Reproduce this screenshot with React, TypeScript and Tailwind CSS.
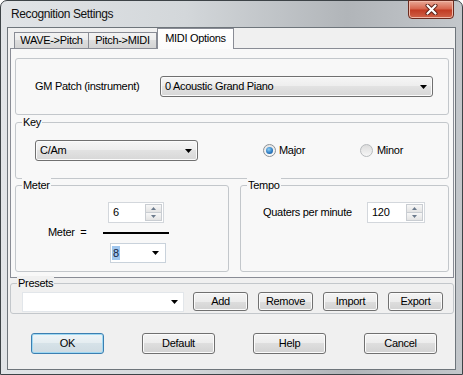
import React from "react";

const Arrow = () => (
  <svg width="7" height="4" viewBox="0 0 7 4" className="shrink-0">
    <path d="M0 0H7L3.5 4Z" fill="#000" />
  </svg>
);

function DropList({ text, className }: { text: string; className: string }) {
  return (
    <div
      className={`flex items-center justify-between border border-[#707070] rounded-[3px] bg-[linear-gradient(#f6f6f6,#ededed_50%,#e2e2e2_50%,#d7d7d7)] shadow-[inset_0_0_0_1px_#fbfbfb] pl-[4px] pr-[5px] ${className}`}
    >
      <span>{text}</span>
      <Arrow />
    </div>
  );
}

function SpinArrow({ up }: { up?: boolean }) {
  return (
    <svg width="5" height="3" viewBox="0 0 5 3">
      <path d={up ? "M0 3H5L2.5 0Z" : "M0 0H5L2.5 3Z"} fill="#6b7a8c" />
    </svg>
  );
}

function Spin({ value, className }: { value: string; className: string }) {
  return (
    <div className={`flex border border-[#d3d7dc] bg-white ${className}`}>
      <div className="flex-1 flex items-center pl-[4px]">{value}</div>
      <div className="w-[18px] flex flex-col p-px pl-0">
        <div className="flex-1 flex items-center justify-center border border-[#c9cdd2] bg-[linear-gradient(#f7f7f7,#e4e4e4)]">
          <SpinArrow up />
        </div>
        <div className="flex-1 flex items-center justify-center border border-t-0 border-[#c9cdd2] bg-[linear-gradient(#f7f7f7,#e4e4e4)]">
          <SpinArrow />
        </div>
      </div>
    </div>
  );
}

function Group({
  label,
  className,
  bg,
  children,
}: {
  label: string;
  className: string;
  bg: string;
  children?: React.ReactNode;
}) {
  return (
    <div className={`relative border border-[#c3c7cb] rounded-[3px] ${className}`}>
      <span className={`absolute left-[6px] top-[-8px] px-px leading-[14px] ${bg}`}>{label}</span>
      {children}
    </div>
  );
}

function Btn({
  children,
  className,
  def,
}: {
  children: React.ReactNode;
  className: string;
  def?: boolean;
}) {
  return (
    <div
      className={`flex items-center justify-center rounded-[3px] border ${
        def
          ? "border-[#3c7fb1] bg-[linear-gradient(#eef5f8,#e4ecf0_50%,#d6e2e8_50%,#cfdbe2)] shadow-[inset_0_0_0_1px_#9fd8f2]"
          : "border-[#707070] bg-[linear-gradient(#f4f4f4,#ececec_50%,#dedede_50%,#d2d2d2)] shadow-[inset_0_0_0_1px_#fbfbfb]"
      } ${className}`}
    >
      {children}
    </div>
  );
}

export default function App() {
  return (
    <div className="w-[463px] h-[375px] overflow-hidden font-['Liberation_Sans',Arial,sans-serif] text-[11px] leading-[13px] tracking-[-0.3px] text-black">
      <div className="w-full h-full flex flex-col border border-[#3d4347] rounded-t-[7px] bg-[linear-gradient(90deg,#e1e4e7,#d3d7da_40%,#b1b5b9_75%,#c3c7cb)]">
        {/* title bar */}
        <div className="h-[26px] flex items-start justify-between shrink-0">
          <div className="pl-[10px] pt-[6px] text-[12px] leading-[14px] tracking-[-0.4px] text-[#111]">
            Recognition Settings
          </div>
          <div className="mr-[8px] -mt-px w-[46px] h-[19px] rounded-b-[4px] border border-[#6b2a1e] bg-[linear-gradient(#e9a896,#d6634b_48%,#c13a22_52%,#cf6248)] shadow-[inset_0_0_0_1px_#f0b8a8] flex items-center justify-center">
            <svg width="13" height="11" viewBox="0 0 13 11">
              <path d="M2.5 1.5L10.5 9.5M10.5 1.5L2.5 9.5" stroke="#5a1e14" strokeWidth="4" strokeLinecap="round" />
              <path d="M2.5 1.5L10.5 9.5M10.5 1.5L2.5 9.5" stroke="#ffffff" strokeWidth="2.2" strokeLinecap="round" />
            </svg>
          </div>
        </div>

        {/* client */}
        <div className="mx-[6px] h-[343px] shrink-0 border border-[#6e757b] bg-[#f0f0f0] flex flex-col">
          {/* tabs */}
          <div className="relative z-10 h-[20px] flex items-end pl-[6px]">
            <div className="w-[75px] h-[16px] border border-b-0 border-[#898c95] bg-[linear-gradient(#f3f3f3,#ebebeb_50%,#dedede_50%,#d4d4d4)] flex items-center justify-center">
              WAVE-&gt;Pitch
            </div>
            <div className="w-[68px] h-[16px] border border-b-0 border-l-0 border-[#898c95] bg-[linear-gradient(#f3f3f3,#ebebeb_50%,#dedede_50%,#d4d4d4)] flex items-center justify-center">
              Pitch-&gt;MIDI
            </div>
            <div className="w-[77px] h-[21px] -mb-px border border-b-0 border-[#898c95] bg-[linear-gradient(#ffffff,#fbfbfb)] flex items-start justify-center pt-[3px]">
              MIDI Options
            </div>
          </div>

          {/* tab panel */}
          <div className="ml-[2px] w-[444px] h-[230px] shrink-0 border border-[#898c95] bg-[#f8f8f8] pl-[4px] pt-[9px] flex flex-col">
            <Group label="" bg="bg-transparent" className="w-[434px] h-[57px] shrink-0 flex items-center pl-[19px]">
              <div className="w-[125px]">GM Patch (instrument)</div>
              <DropList text="0 Acoustic Grand Piano" className="w-[273px] h-[21px]" />
            </Group>

            <Group label="Key" bg="bg-[#f8f8f8]" className="mt-[7px] w-[434px] h-[57px] shrink-0 flex items-center pl-[19px]">
              <DropList text="C/Am" className="w-[163px] h-[21px]" />
              <div className="ml-[65px] w-[97px] flex items-center gap-[3px]">
                <div className="w-[13px] h-[13px] rounded-full border border-[#8c9196] bg-[linear-gradient(#e6e6e6,#fafafa)] flex items-center justify-center">
                  <div className="w-[7px] h-[7px] rounded-full bg-[radial-gradient(circle_at_40%_35%,#8fd0f5,#2a78c0_60%,#1b4f86)]" />
                </div>
                <span>Major</span>
              </div>
              <div className="flex items-center gap-[4px]">
                <div className="w-[13px] h-[13px] rounded-full border border-[#b7babd] bg-[linear-gradient(#dcdcdc,#f6f6f6)]" />
                <span>Minor</span>
              </div>
            </Group>

            <div className="mt-[6px] flex shrink-0">
              <Group label="Meter" bg="bg-[#f8f8f8]" className="w-[214px] h-[87px] flex items-start pl-[32px] pt-[16px]">
                <div className="w-[55px] mt-[24px] whitespace-pre">Meter  =</div>
                <div className="w-[66px] flex flex-col">
                  <Spin value="6" className="ml-[5px] w-[56px] h-[21px]" />
                  <div className="mt-[9px] h-[2px] bg-black" />
                  <div className="mt-[9px] ml-[7px] w-[56px] h-[20px] border border-[#c9d2db] bg-white flex items-center justify-between pl-[1px] pr-[6px]">
                    <span className="bg-[#9fc6ee] px-px leading-[14px] text-[#13233d]">8</span>
                    <Arrow />
                  </div>
                </div>
              </Group>
              <Group label="Tempo" bg="bg-[#f8f8f8]" className="ml-[11px] w-[209px] h-[87px] flex items-start pl-[22px] pt-[16px]">
                <div className="flex items-center h-[21px]">
                  <div className="w-[104px]">Quaters per minute</div>
                  <Spin value="120" className="w-[58px] h-[21px]" />
                </div>
              </Group>
            </div>
          </div>

          {/* presets */}
          <Group label="Presets" bg="bg-[#f0f0f0]" className="mt-[5px] ml-[2px] w-[444px] h-[31px] shrink-0 flex items-start pl-[11px] pt-[8px]">
            <div className="w-[162px] h-[20px] border border-[#e2e6ea] bg-white flex items-center justify-end pr-[5px]">
              <Arrow />
            </div>
            <div className="ml-[9px] flex gap-[10px]">
              <Btn className="w-[55px] h-[19px]">Add</Btn>
              <Btn className="w-[55px] h-[19px]">Remove</Btn>
              <Btn className="w-[55px] h-[19px]">Import</Btn>
              <Btn className="w-[55px] h-[19px]">Export</Btn>
            </div>
          </Group>

          {/* bottom buttons */}
          <div className="mt-[19px] pl-[23px] flex gap-[38px]">
            <Btn def className="w-[73px] h-[21px]">OK</Btn>
            <Btn className="w-[73px] h-[21px]">Default</Btn>
            <Btn className="w-[73px] h-[21px]">Help</Btn>
            <Btn className="w-[73px] h-[21px]">Cancel</Btn>
          </div>
        </div>
      </div>
    </div>
  );
}
